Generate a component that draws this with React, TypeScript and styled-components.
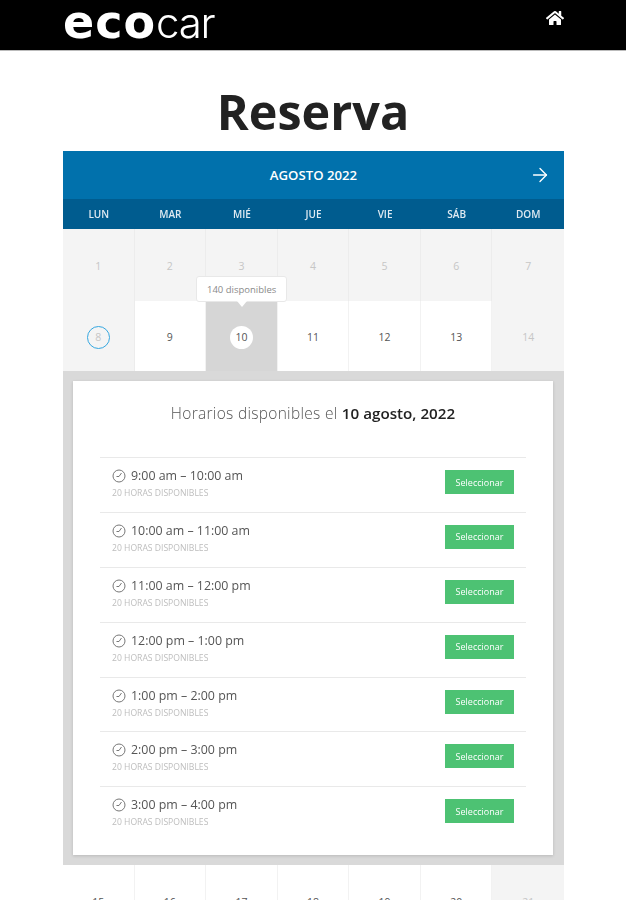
import React from "react";
import styled, { createGlobalStyle } from "styled-components";
import { FaHome } from "react-icons/fa";
import { ArrowRight } from "lucide-react";

const Global = createGlobalStyle`
  html, body { margin: 0; padding: 0; height: 100%; overflow: hidden; background: #fff; }
  body { font-family: "Open Sans", "Liberation Sans", sans-serif; }
`;

const Page = styled.div`
  width: 626px;
  height: 900px;
  overflow: hidden;
  filter: blur(0.6px);
`;

const TopBar = styled.header`
  height: 50px;
  background: #000;
  border-bottom: 1px solid #bbb;
  padding: 0 62px 0 63px;
  display: flex;
  justify-content: space-between;
  color: #fff;
`;

const Logo = styled.div`
  font-family: "Inter", "Liberation Sans", sans-serif;
  font-size: 42px;
  line-height: 44px;
  letter-spacing: -1.3px;
  font-weight: 300;
  white-space: nowrap;
  & b {
    font-family: "DejaVu Sans", "Liberation Sans", sans-serif;
    font-size: 46px;
    font-weight: 700;
    letter-spacing: 1px;
  }
`;

const HomeLink = styled.div`
  padding-top: 9px;
  font-size: 18px;
  line-height: 0;
`;

const Title = styled.h1`
  margin: 0;
  height: 100px;
  text-align: center;
  font-size: 48.5px;
  line-height: 120px;
  font-weight: 700;
  color: #222;
`;

const Calendar = styled.section`
  width: 501px;
  margin-left: 63px;
`;

const MonthBar = styled.div`
  height: 48px;
  background: #0171ac;
  color: #fff;
  font-size: 13.2px;
  font-weight: 600;
  display: flex;
  align-items: center;
  justify-content: center;
  position: relative;
  & svg { position: absolute; right: 13px; top: 13px; }
`;

const Weekdays = styled.div`
  height: 30px;
  background: #005c8f;
  color: #dfeaf2;
  display: grid;
  grid-template-columns: repeat(7, 1fr);
  align-items: center;
  text-align: center;
  font-size: 10px;
  font-weight: 600;
`;

const Week = styled.div<{ $h: number }>`
  display: grid;
  grid-template-columns: repeat(7, 1fr);
  height: ${(p) => p.$h}px;
`;

const Day = styled.div<{ $kind: "off" | "on" | "sel" }>`
  position: relative;
  display: flex;
  align-items: center;
  justify-content: center;
  padding-top: 2px;
  font-size: 10.5px;
  box-sizing: border-box;
  color: ${(p) => (p.$kind === "off" ? "#c6c6c6" : "#555")};
  background: ${(p) =>
    p.$kind === "off" ? "#f4f4f4" : p.$kind === "sel" ? "#d6d6d6" : "#fff"};
  border-right: 1px solid ${(p) => (p.$kind === "off" ? "#ececec" : "#f2f2f2")};
  &:last-child { border-right: 0; }
`;

const Circle = styled.span<{ $ring?: boolean }>`
  width: 23px;
  height: 23px;
  box-sizing: border-box;
  border-radius: 50%;
  display: flex;
  align-items: center;
  justify-content: center;
  background: ${(p) => (p.$ring ? "transparent" : "#fff")};
  border: ${(p) => (p.$ring ? "1.5px solid #35a7e0" : "0")};
`;

const Tooltip = styled.div`
  position: absolute;
  left: -10px;
  top: -25px;
  width: 91px;
  height: 26px;
  box-sizing: border-box;
  background: #fff;
  border: 1px solid #e8e8e8;
  border-radius: 3px;
  color: #8a8a8a;
  font-size: 9.5px;
  display: flex;
  align-items: center;
  justify-content: center;
  z-index: 2;
  &::after {
    content: "";
    position: absolute;
    left: 40px;
    bottom: -6px;
    border-left: 5px solid transparent;
    border-right: 5px solid transparent;
    border-top: 6px solid #fff;
  }
`;

const Panel = styled.div`
  background: #d9d9d9;
  padding: 10px 11px 10px 10px;
`;

const Card = styled.div`
  background: #fff;
  height: 474px;
  padding: 0 27px;
  box-sizing: border-box;
  box-shadow: 0 1px 3px rgba(0, 0, 0, 0.15);
`;

const CardTitle = styled.h2`
  margin: 0;
  height: 76px;
  box-sizing: border-box;
  padding-top: 21px;
  text-align: center;
  font-size: 15.5px;
  letter-spacing: 0.3px;
  line-height: 22px;
  font-weight: 300;
  color: #555;
  white-space: nowrap;
  & b { font-weight: 600; font-size: 15.2px; letter-spacing: 0; color: #222; }
`;

const Slot = styled.div`
  height: 54.9px;
  box-sizing: border-box;
  border-top: 1px solid #e9e9e9;
  padding: 11px 12px 0 12px;
  display: flex;
  justify-content: space-between;
`;

const TimeLine = styled.div`
  display: flex;
  align-items: center;
  gap: 5px;
  height: 14px;
  font-size: 12.4px;
  line-height: 14px;
  color: #555;
  white-space: nowrap;
`;

const Sub = styled.div`
  margin-top: 5px;
  font-size: 8.6px;
  line-height: 10px;
  color: #bdbdbd;
  text-transform: uppercase;
  white-space: nowrap;
`;

const Select = styled.button`
  width: 69px;
  height: 24px;
  margin-top: 1px;
  border: 0;
  padding: 0;
  background: #4dc273;
  color: #fff;
  font-family: inherit;
  font-size: 9px;
`;

const ClockIcon = () => (
  <svg width="14" height="14" viewBox="0 0 14 14" fill="none" stroke="#777" strokeWidth="1">
    <circle cx="7" cy="7" r="6" />
    <path d="M7 7.5 L9.5 4 M7 7.5 L4.5 7.5" />
  </svg>
);

const slots = [
  "9:00 am – 10:00 am",
  "10:00 am – 11:00 am",
  "11:00 am – 12:00 pm",
  "12:00 pm – 1:00 pm",
  "1:00 pm – 2:00 pm",
  "2:00 pm – 3:00 pm",
  "3:00 pm – 4:00 pm",
];

const dayNames = ["LUN", "MAR", "MIÉ", "JUE", "VIE", "SÁB", "DOM"];

export default function App() {
  return (
    <Page>
      <Global />
      <TopBar>
        <Logo>
          <b>eco</b>car
        </Logo>
        <HomeLink>
          <FaHome />
        </HomeLink>
      </TopBar>
      <Title>Reserva</Title>
      <Calendar>
        <MonthBar>
          AGOSTO 2022
          <ArrowRight size={22} strokeWidth={1.5} />
        </MonthBar>
        <Weekdays>
          {dayNames.map((d) => (
            <span key={d}>{d}</span>
          ))}
        </Weekdays>
        <Week $h={72}>
          {[1, 2, 3, 4, 5, 6, 7].map((n) => (
            <Day key={n} $kind="off">
              {n}
            </Day>
          ))}
        </Week>
        <Week $h={70}>
          <Day $kind="off">
            <Circle $ring>8</Circle>
          </Day>
          <Day $kind="on">9</Day>
          <Day $kind="sel">
            <Tooltip>140 disponibles</Tooltip>
            <Circle>10</Circle>
          </Day>
          <Day $kind="on">11</Day>
          <Day $kind="on">12</Day>
          <Day $kind="on">13</Day>
          <Day $kind="off">14</Day>
        </Week>
        <Panel>
          <Card>
            <CardTitle>
              Horarios disponibles el <b>10 agosto, 2022</b>
            </CardTitle>
            {slots.map((s) => (
              <Slot key={s}>
                <div>
                  <TimeLine>
                    <ClockIcon />
                    {s}
                  </TimeLine>
                  <Sub>20 horas disponibles</Sub>
                </div>
                <Select>Seleccionar</Select>
              </Slot>
            ))}
          </Card>
        </Panel>
        <Week $h={72}>
          {[15, 16, 17, 18, 19, 20].map((n) => (
            <Day key={n} $kind="on">
              {n}
            </Day>
          ))}
          <Day $kind="off">21</Day>
        </Week>
      </Calendar>
    </Page>
  );
}
